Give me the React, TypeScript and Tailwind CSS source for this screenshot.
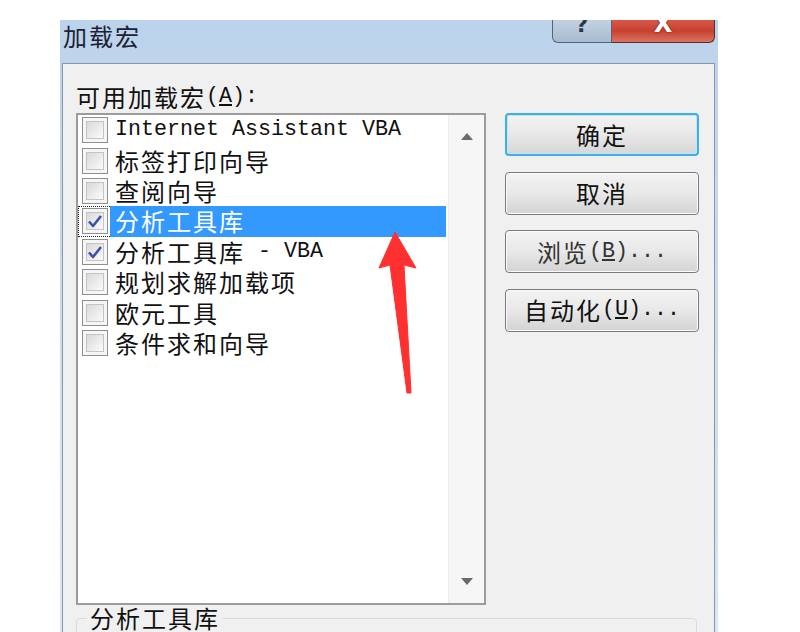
const cjk = "font-['Noto_Sans_CJK_SC','Noto_Sans_CJK_JP',sans-serif]";
const mono = "font-['Liberation_Mono','Noto_Sans_CJK_SC',monospace]";

type Item = { cjk?: string; latin?: string; checked?: boolean; selected?: boolean };

const items: Item[] = [
  { latin: "Internet Assistant VBA" },
  { cjk: "标签打印向导" },
  { cjk: "查阅向导" },
  { cjk: "分析工具库", checked: true, selected: true },
  { cjk: "分析工具库", latin: " - VBA", checked: true },
  { cjk: "规划求解加载项" },
  { cjk: "欧元工具" },
  { cjk: "条件求和向导" },
];

function CheckBox({ checked }: { checked?: boolean }) {
  return (
    <div className="w-[26px] h-[26px] border border-[#8e8f8f] bg-[#f6f6f6] p-[3px]">
      <div className="w-full h-full border border-[#c4c4c4] bg-gradient-to-br from-[#d9d9d9] to-[#fbfbfb] flex items-center justify-center">
        {checked && (
          <svg width="16" height="14" viewBox="0 0 16 14">
            <path d="M2 7.5 L6 12 L14 2" fill="none" stroke="#3d52a6" strokeWidth="2.6" strokeLinejoin="round" />
          </svg>
        )}
      </div>
    </div>
  );
}

function Row({ item }: { item: Item }) {
  return (
    <div className="h-[30.4px] shrink-0 flex items-center">
      <div
        className={
          item.selected
            ? "h-full pl-[3px] pr-[2px] flex items-center border-l border-y border-dotted border-[#222]"
            : "h-full pl-[4px] pr-[2px] flex items-center"
        }
      >
        <CheckBox checked={item.checked} />
      </div>
      <div
        className={
          item.selected
            ? "flex-1 h-full mr-[2px] pl-[5px] flex items-center bg-[#3399ff] text-white"
            : "flex-1 h-full mr-[2px] pl-[5px] flex items-center text-[#111]"
        }
      >
        {item.cjk && <span className={`${cjk} text-[24px] tracking-[2px] leading-none`}>{item.cjk}</span>}
        {item.latin && <span className={`${mono} text-[21.67px] leading-none whitespace-pre`}>{item.latin}</span>}
      </div>
    </div>
  );
}

function Button({ children, primary }: { children: React.ReactNode; primary?: boolean }) {
  return (
    <div
      className={
        primary
          ? "h-[43px] rounded-[4px] border-2 border-[#3fb0e6] bg-gradient-to-b from-[#f3f3f3] via-[#e8e8e8] to-[#d6d6d6] flex items-center justify-center text-[#111] shadow-[inset_0_0_0_1px_#bfe6f8]"
          : "h-[43px] rounded-[4px] border border-[#7a7a7a] bg-gradient-to-b from-[#f3f3f3] via-[#e8e8e8] to-[#d3d3d3] flex items-center justify-center text-[#111] shadow-[inset_0_0_0_1px_#fbfbfb]"
      }
    >
      {children}
    </div>
  );
}

export default function App() {
  return (
    <div className={`relative w-[800px] h-[632px] overflow-hidden bg-white ${cjk}`}>
      <div className="ml-[60px] mt-[20px] w-[658px] h-[612px] flex flex-col bg-gradient-to-b from-[#bcd3ec] to-[#d8e6f5]">
        {/* Title bar */}
        <div className="h-[43px] shrink-0 flex items-start justify-between">
          <div className="pl-[3px] pt-[4px] text-[24px] tracking-[2px] leading-[24px] text-[#1c2233]">
            加载宏
          </div>
          <div className="flex mr-[3px]">
            <div className="w-[60px] h-[23px] overflow-hidden border border-t-0 border-[#566473] rounded-bl-[6px] bg-gradient-to-b from-[#c2d1e2] to-[#a9bbd0] flex justify-center">
              <span className="font-['DejaVu_Sans',sans-serif] font-bold text-[22px] leading-none -mt-[6px] text-[#2c3847]">?</span>
            </div>
            <div className="w-[103px] h-[23px] overflow-hidden border border-t-0 border-l-0 border-[#5a2f28] rounded-br-[6px] bg-gradient-to-b from-[#d7574a] via-[#c8402f] to-[#d9735f] flex justify-center">
              <span className="font-['DejaVu_Sans',sans-serif] font-bold text-[24px] leading-none -mt-[8px] text-white [text-shadow:0_0_2px_#4a1a12]">X</span>
            </div>
          </div>
        </div>

        {/* Client area */}
        <div className="flex-1 min-h-0 overflow-hidden ml-[2px] mr-[3px] border border-[#8b97a4] border-b-0 bg-[#f0f0f0] px-[13px] pt-[16px]">
          <div className="h-[33px] flex items-center text-[24px] tracking-[2px] leading-none text-[#111]">
            可用加载宏
            <span className={`${mono} text-[21.67px] tracking-normal`}>
              (<span className="underline underline-offset-2">A</span>):
            </span>
          </div>

          <div className="flex gap-[19px]">
            {/* List box */}
            <div className="w-[410px] h-[492px] shrink-0 border-2 border-[#9c9c9c] bg-white flex">
              <div className="flex-1 flex flex-col">
                {items.map((it, i) => (
                  <Row key={i} item={it} />
                ))}
              </div>
              <div className="w-[36px] bg-[#f6f6f6] border-l border-[#ececec] flex flex-col justify-between items-center py-[18px]">
                <svg width="12" height="7" viewBox="0 0 12 7">
                  <path d="M0 7 L6 0 L12 7 Z" fill="#6a6a6a" />
                </svg>
                <svg width="12" height="7" viewBox="0 0 12 7">
                  <path d="M0 0 L12 0 L6 7 Z" fill="#6a6a6a" />
                </svg>
              </div>
            </div>

            {/* Buttons */}
            <div className="w-[194px] flex flex-col gap-[15.5px] text-[24px] tracking-[2px] leading-none">
              <Button primary>确定</Button>
              <Button>取消</Button>
              <Button>
                <span className="text-[#333]">浏览</span>
                <span className={`${mono} text-[21.67px] tracking-normal text-[#333]`}>
                  (<span className="underline underline-offset-2">B</span>)...
                </span>
              </Button>
              <Button>
                自动化
                <span className={`${mono} text-[21.67px] tracking-normal`}>
                  (<span className="underline underline-offset-2">U</span>)...
                </span>
              </Button>
            </div>
          </div>

          <fieldset className="mt-[1px] w-[621px] h-[60px] border border-[#d5dde3] rounded-[4px] px-[10px]">
            <legend className="px-[3px] text-[24px] tracking-[2px] leading-none text-[#111]">分析工具库</legend>
          </fieldset>
        </div>
      </div>

      {/* Red annotation arrow */}
      <svg className="absolute left-0 top-0 pointer-events-none" width="800" height="632" viewBox="0 0 800 632">
        <path
          d="M395 232 L416 268 L404 265 L411 393 L407 393 L390 265 L379 268 Z"
          fill="#ff3030"
          stroke="#ff3030"
          strokeWidth="1"
          strokeLinejoin="round"
        />
      </svg>
    </div>
  );
}
